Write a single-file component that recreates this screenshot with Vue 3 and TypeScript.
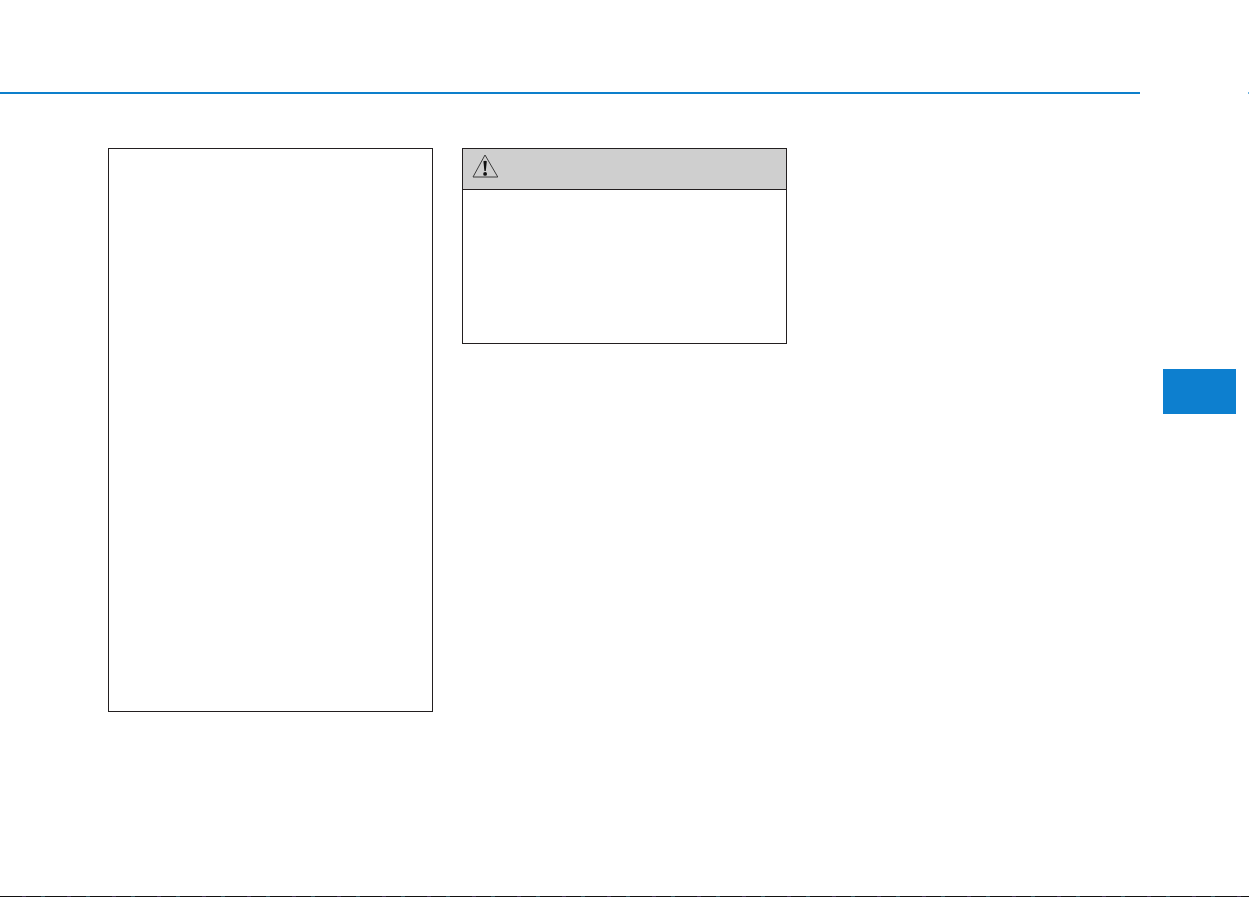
<script setup lang="ts">
</script>

<template>
  <div class="page">
    <div class="rule-row">
      <div class="rule"></div>
      <div class="tick"></div>
    </div>
    <div class="main">
      <div class="box tall"></div>
      <div class="box warning">
        <div class="warning-head">
          <svg class="warn-icon" width="28" height="28" viewBox="0 0 28 28" aria-hidden="true">
            <path d="M13 3 L25.8 25 H1 Z" fill="none" stroke="#3a3a3a" stroke-width="1" stroke-linejoin="round" />
            <path d="M11.4 9.2 Q13 8.4 14.8 9.2 L13.8 19 H12.4 Z" fill="#111" />
            <circle cx="13.1" cy="21.9" r="1.9" fill="#111" />
          </svg>
        </div>
      </div>
      <div class="tab"></div>
    </div>
    <div class="edge"></div>
  </div>
</template>

<style>
html, body { margin: 0; background: #fff; }
</style>

<style scoped>
.page {
  width: 1249px;
  height: 897px;
  display: flex;
  flex-direction: column;
  background: #fff;
  overflow: hidden;
}
.rule-row {
  display: flex;
  justify-content: space-between;
  margin-top: 92px;
  height: 2px;
}
.rule { width: 1140px; background: #0d7fcb; }
.tick { width: 1px; background: #0d7fcb; opacity: 0.6; }
.main {
  display: flex;
  align-items: flex-start;
  padding: 54px 13px 0 108px;
  gap: 29px;
}
.box {
  box-sizing: border-box;
  width: 325px;
  border: 1px solid #231f20;
  background: #fff;
}
.tall { height: 564px; }
.warning { height: 196px; }
.warning-head {
  box-sizing: border-box;
  height: 41px;
  background: #cfcfcf;
  border-bottom: 1px solid #231f20;
  padding: 3px 0 0 9px;
}
.warn-icon { display: block; }
.tab {
  width: 73px;
  height: 45px;
  margin-top: 221px;
  margin-left: auto;
  background: #0d7fcf;
}
.edge {
  margin-top: auto;
  height: 1px;
  background: repeating-linear-gradient(90deg, #111 0 22px, #3a2a4a 22px 26px, #111 26px 41px, #2a4a52 41px 45px);
}
</style>
